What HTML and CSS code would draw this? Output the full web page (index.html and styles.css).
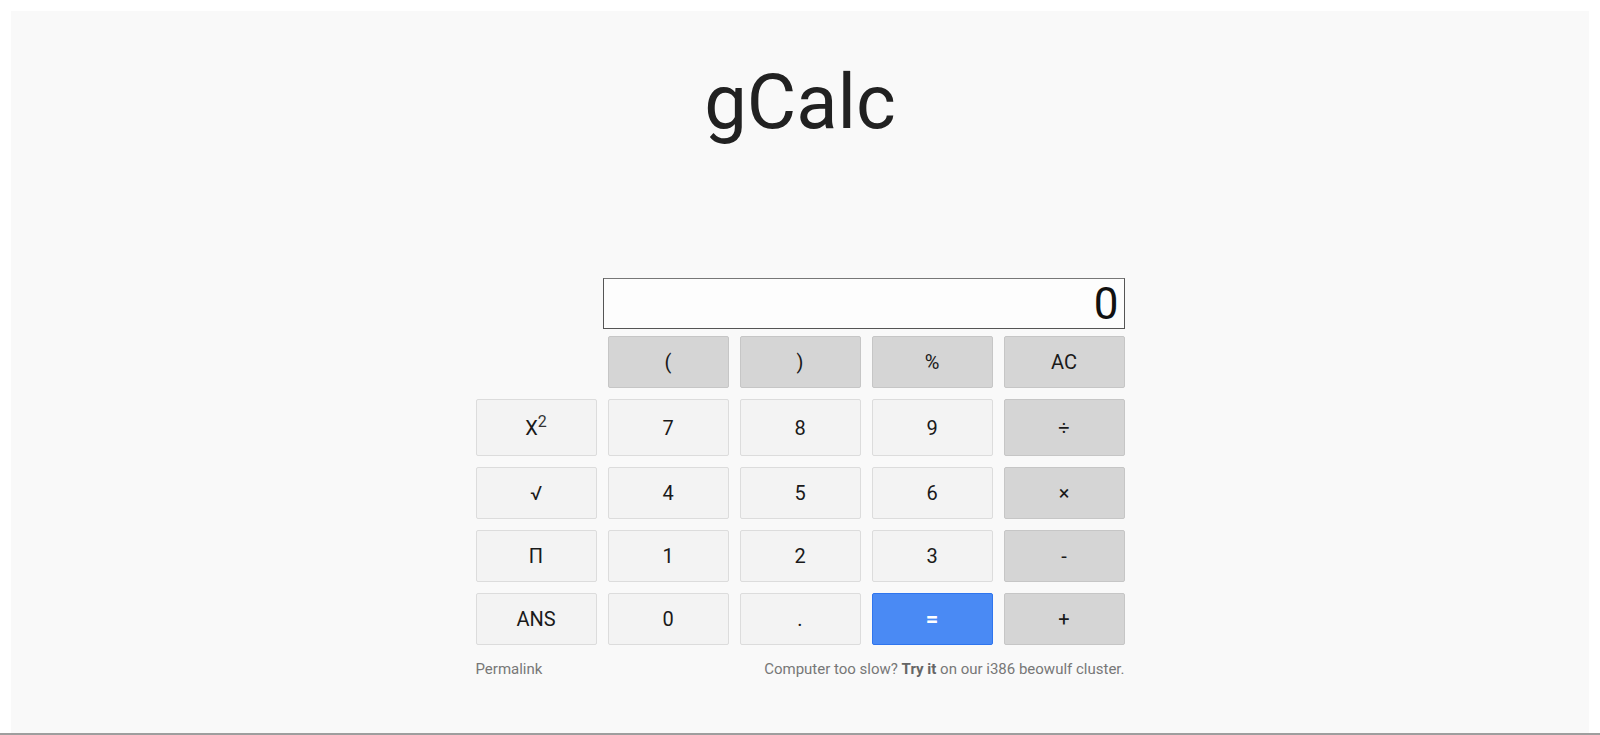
FILE: index.html
```html
<!DOCTYPE html>
<html lang="en">

<head>
    <meta charset="UTF-8">
    <meta name="viewport" content="width=device-width, initial-scale=1.0">
    <title>gCalc</title>
    <link rel="stylesheet" href="styles.css">
</head>

<body>
    <div class="page">
        <div class="panel">
            <h1 class="title">gCalc</h1>

            <div class="calc">
                <div class="display-row">
                    <div class="display" id="display">0</div>
                </div>

                <div class="keys">
                    <span class="key-gap"></span>
                    <button class="key key-op">(</button>
                    <button class="key key-op">)</button>
                    <button class="key key-op">%</button>
                    <button class="key key-op">AC</button>

                    <button class="key">X<sup>2</sup></button>
                    <button class="key">7</button>
                    <button class="key">8</button>
                    <button class="key">9</button>
                    <button class="key key-op">÷</button>

                    <button class="key">√</button>
                    <button class="key">4</button>
                    <button class="key">5</button>
                    <button class="key">6</button>
                    <button class="key key-op">×</button>

                    <button class="key">Π</button>
                    <button class="key">1</button>
                    <button class="key">2</button>
                    <button class="key">3</button>
                    <button class="key key-op">-</button>

                    <button class="key">ANS</button>
                    <button class="key">0</button>
                    <button class="key">.</button>
                    <button class="key key-equals">=</button>
                    <button class="key key-op">+</button>
                </div>

                <div class="calc-footer">
                    <a href="#" class="permalink">Permalink</a>
                    <span class="promo">Computer too slow? <b>Try it</b> on our i386 beowulf cluster.</span>
                </div>
            </div>
        </div>
    </div>
    <div class="bottom-rule"></div>
</body>

</html>
```

FILE: styles.css
```css
* {
    margin: 0;
    padding: 0;
    box-sizing: border-box;
}

body {
    font-family: Roboto, 'Liberation Sans', Arial, sans-serif;
    background: #ffffff;
    color: #212121;
}

.page {
    padding: 11px 11px 0;
}

.panel {
    background: #f9f9f9;
    height: 722px;
    padding-top: 46px;
}

.title {
    font-size: 76px;
    font-weight: 400;
    line-height: 90px;
    text-align: center;
    color: #212121;
}

.calc {
    width: 649px;
    margin: 131px auto 0;
}

.display-row {
    display: flex;
    justify-content: flex-end;
}

.display {
    width: 522px;
    height: 51px;
    background: #fdfdfd;
    border: 1px solid #555;
    border-top-color: #777;
    display: flex;
    align-items: center;
    justify-content: flex-end;
    padding-right: 5px;
    padding-top: 1px;
    font-size: 44px;
    line-height: 1;
    color: #111;
}

.keys {
    margin-top: 7px;
    display: grid;
    grid-template-columns: repeat(5, 121px);
    grid-template-rows: 52px 57px 52px 52px 52px;
    column-gap: 11px;
    row-gap: 11px;
}

.key {
    font-family: Roboto, 'Liberation Sans', Arial, sans-serif;
    font-size: 20px;
    color: #1a1a1a;
    background: #f3f3f3;
    border: 1px solid #dcdcdc;
    border-radius: 2px;
    cursor: pointer;
    line-height: 1;
}

.key sup {
    font-size: 16px;
    vertical-align: 8px;
    line-height: 0;
    color: #333;
}

.key-op {
    background: #d5d5d5;
    border-color: #c6c6c6;
}

.key-equals {
    background: #4a8af4;
    border-color: #2f75ee;
    color: #fff;
    font-weight: 700;
    font-size: 22px;
}

.calc-footer {
    display: flex;
    justify-content: space-between;
    margin-top: 14px;
    font-size: 15px;
    line-height: 20px;
    color: #777;
}

.permalink {
    color: #777;
    text-decoration: none;
}

.promo b {
    color: #666;
}

.bottom-rule {
    height: 2px;
    background: #9e9e9e;
}
```
